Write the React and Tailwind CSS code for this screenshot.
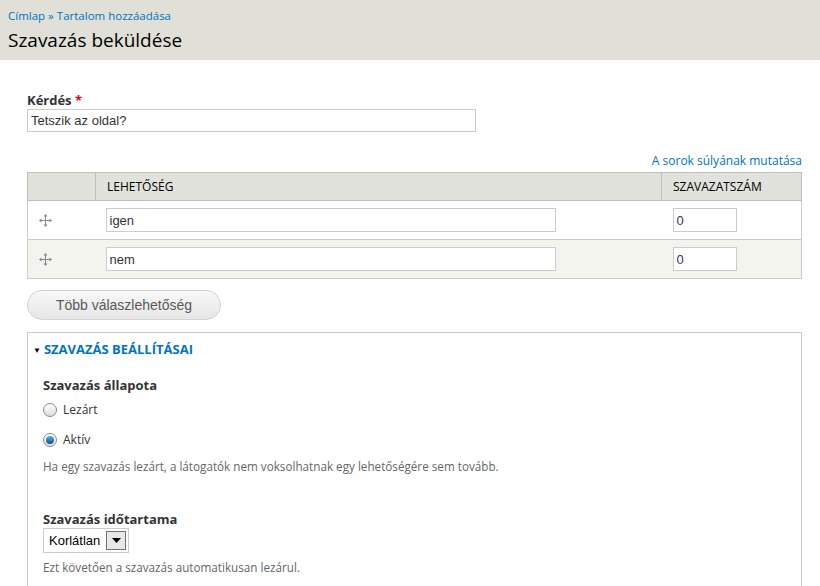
export default function App() {
  return (
    <div className="min-h-[586px] w-[820px] bg-white font-['Open_Sans',sans-serif] text-[#333]">
      <div className="h-[60px] bg-[#e0e0d8] px-[8px] pt-[8px]">
        <div className="text-[11.5px] leading-[15px] text-[#0074bd]">
          <a>Címlap</a> » <a>Tartalom hozzáadása</a>
        </div>
        <h1 className="mt-[6px] text-[19px] leading-[22px] font-normal text-[#000]">Szavazás beküldése</h1>
      </div>

      <div className="pl-[27px] pr-[18px] pt-[32px]">
        <label className="block text-[13px] leading-[16px] font-bold text-[#333]">
          Kérdés <span className="text-red-600">*</span>
        </label>
        <input
          readOnly
          value="Tetszik az oldal?"
          className="mt-[1px] block h-[23px] w-[449px] border border-[#ccc] px-[3px] font-['Liberation_Sans',sans-serif] text-[13px] text-[#333]"
        />

        <div className="mt-[21px] text-right text-[12px] leading-[16px] text-[#0074bd]">A sorok súlyának mutatása</div>

        <table className="mt-[3px] w-full border-collapse border border-[#ccc] text-[12px]">
          <thead>
            <tr className="h-[28px] bg-[#e1e2dc] text-left">
              <th className="w-[68px] border border-[#bebfb9] font-normal"></th>
              <th className="border border-[#bebfb9] pl-[11px] font-normal text-[#000]">LEHETŐSÉG</th>
              <th className="w-[140px] border border-[#bebfb9] pl-[11px] font-normal text-[#000]">SZAVAZATSZÁM</th>
            </tr>
          </thead>
          <tbody>
            {[
              ["igen", "bg-white"],
              ["nem", "bg-[#f3f4ee]"],
            ].map(([v, bg]) => (
              <tr key={v} className={`h-[39px] ${bg} border-b border-[#ccc]`}>
                <td className="pl-[11px]">
                  <Move />
                </td>
                <td className="pl-[10px]">
                  <input
                    readOnly
                    value={v}
                    className="block h-[24px] w-[450px] border border-[#ccc] bg-white px-[3px] font-['Liberation_Sans',sans-serif] text-[13px] text-[#333]"
                  />
                </td>
                <td className="pl-[11px]">
                  <input
                    readOnly
                    value="0"
                    className="block h-[24px] w-[64px] border border-[#ccc] bg-white px-[3px] font-['Liberation_Sans',sans-serif] text-[13px] text-[#4a2d5a]"
                  />
                </td>
              </tr>
            ))}
          </tbody>
        </table>

        <button className="mt-[11px] h-[30px] w-[194px] rounded-[15px] border border-[#d2d2d2] bg-gradient-to-b from-[#f8f8f8] to-[#e6e6e6] font-['Liberation_Sans',sans-serif] text-[14px] text-[#5a5a5a]">
          Több válaszlehetőség
        </button>

        <fieldset className="mt-[12px] h-[280px] border border-[#ccc] px-[15px]">
          <div className="-ml-[10px] mt-[7px] flex items-center gap-[3px] text-[13px] font-bold text-[#0074bd]">
            <span className="text-[8px] text-[#000]">▼</span>
            SZAVAZÁS BEÁLLÍTÁSAI
          </div>

          <div className="mt-[16px] text-[13px] font-bold text-[#333]">Szavazás állapota</div>
          <div className="mt-[6px] flex items-center gap-[6px] text-[12px]">
            <Radio />
            Lezárt
          </div>
          <div className="mt-[12px] flex items-center gap-[6px] text-[12px]">
            <Radio checked />
            Aktív
          </div>
          <div className="mt-[9px] text-[11.7px] text-[#666]">
            Ha egy szavazás lezárt, a látogatók nem voksolhatnak egy lehetőségére sem tovább.
          </div>

          <div className="mt-[34px] text-[13px] font-bold text-[#333]">Szavazás időtartama</div>
          <div className="mt-[-1px] flex h-[25px] w-[86px] items-center justify-between border border-[#ccc] pl-[5px] pr-[2px] font-['Liberation_Sans',sans-serif] text-[13px] text-[#000]">
            Korlátlan
            <span className="flex h-[19px] w-[20px] items-center justify-center border border-[#707070] bg-[#e8e8e8]">
              <svg width="9" height="5" viewBox="0 0 9 5">
                <path d="M0 0h9L4.5 5z" fill="#000" />
              </svg>
            </span>
          </div>
          <div className="mt-[6px] text-[11.7px] text-[#666]">Ezt követően a szavazás automatikusan lezárul.</div>
        </fieldset>
      </div>
    </div>
  );
}

function Move() {
  return (
    <svg width="13" height="13" viewBox="0 0 13 13" fill="#888">
      <rect x="6" y="2" width="1" height="9" />
      <rect x="2" y="6" width="9" height="1" />
      <path d="M6.5 0L4.5 2.5h4z" />
      <path d="M6.5 13L4.5 10.5h4z" />
      <path d="M0 6.5L2.5 4.5v4z" />
      <path d="M13 6.5L10.5 4.5v4z" />
    </svg>
  );
}

function Radio({ checked }) {
  return (
    <span className="flex h-[14px] w-[14px] items-center justify-center rounded-full border border-[#888] bg-gradient-to-b from-[#fff] to-[#ddd]">
      {checked && <span className="h-[8px] w-[8px] rounded-full bg-gradient-to-b from-[#5fb0e6] to-[#0b4f8a]" />}
    </span>
  );
}
